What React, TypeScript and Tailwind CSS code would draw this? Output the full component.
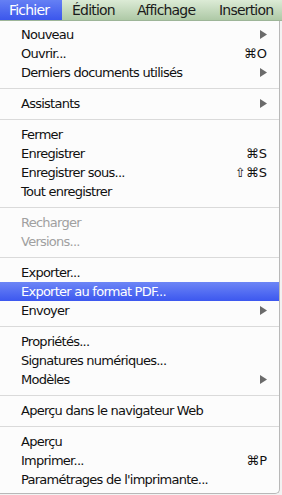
type Item = {
  label: string;
  shortcut?: string;
  submenu?: boolean;
  disabled?: boolean;
  active?: boolean;
};

const groups: Item[][] = [
  [
    { label: "Nouveau", submenu: true },
    { label: "Ouvrir...", shortcut: "⌘O" },
    { label: "Derniers documents utilisés", submenu: true },
  ],
  [{ label: "Assistants", submenu: true }],
  [
    { label: "Fermer" },
    { label: "Enregistrer", shortcut: "⌘S" },
    { label: "Enregistrer sous...", shortcut: "⇧⌘S" },
    { label: "Tout enregistrer" },
  ],
  [
    { label: "Recharger", disabled: true },
    { label: "Versions...", disabled: true },
  ],
  [
    { label: "Exporter..." },
    { label: "Exporter au format PDF...", active: true },
    { label: "Envoyer", submenu: true },
  ],
  [
    { label: "Propriétés..." },
    { label: "Signatures numériques..." },
    { label: "Modèles", submenu: true },
  ],
  [{ label: "Aperçu dans le navigateur Web" }],
  [
    { label: "Aperçu" },
    { label: "Imprimer...", shortcut: "⌘P" },
    { label: "Paramétrages de l'imprimante..." },
  ],
];

function Arrow() {
  return (
    <svg width="7" height="9" viewBox="0 0 7 9" className="block">
      <path d="M0 0 L7 4.5 L0 9 Z" fill="#6b6b6b" />
    </svg>
  );
}

function Row({ item }: { item: Item }) {
  const color = item.active
    ? "text-white bg-[linear-gradient(#6d86f6,#3c57ef)]"
    : item.disabled
    ? "text-[#a0a0a0]"
    : "text-[#111]";
  return (
    <div className={`h-[19px] flex items-center pl-[21px] pr-[12px] ${color}`}>
      <span className="flex-1 whitespace-nowrap">{item.label}</span>
      {item.shortcut && <span className="whitespace-nowrap tracking-normal">{item.shortcut}</span>}
      {item.submenu && <Arrow />}
    </div>
  );
}

export default function App() {
  return (
    <div className="w-[282px] h-[495px] bg-[#f2f2f2] overflow-hidden font-['DejaVu_Sans',sans-serif] text-[13px] leading-none tracking-[-0.75px]">
      <div className="h-[21px] flex items-center bg-[linear-gradient(#dcebd6,#aec9a6)] border-b border-[#9db598] text-[#1a1a1a] text-[14px] tracking-[-0.8px] whitespace-nowrap">
        <div className="h-full w-[62px] shrink-0 flex items-center pl-[9px] text-white bg-[linear-gradient(#6580f4,#3b56ec)]">
          Fichier
        </div>
        <span className="ml-[10px] w-[65px] shrink-0">Édition</span>
        <span className="w-[82px] shrink-0">Affichage</span>
        <span className="shrink-0">Insertion</span>
      </div>
      <div className="w-[280px] bg-[#fcfcfc] pt-[4px] pb-[4px] rounded-br-[5px] border-r border-b border-[#b8b8b8]">
        {groups.map((g, i) => (
          <div key={i}>
            {i > 0 && (
              <div className="h-[12px] flex items-center">
                <div className="h-px w-full bg-[#dadada]" />
              </div>
            )}
            {g.map((item) => (
              <Row key={item.label} item={item} />
            ))}
          </div>
        ))}
      </div>
    </div>
  );
}
